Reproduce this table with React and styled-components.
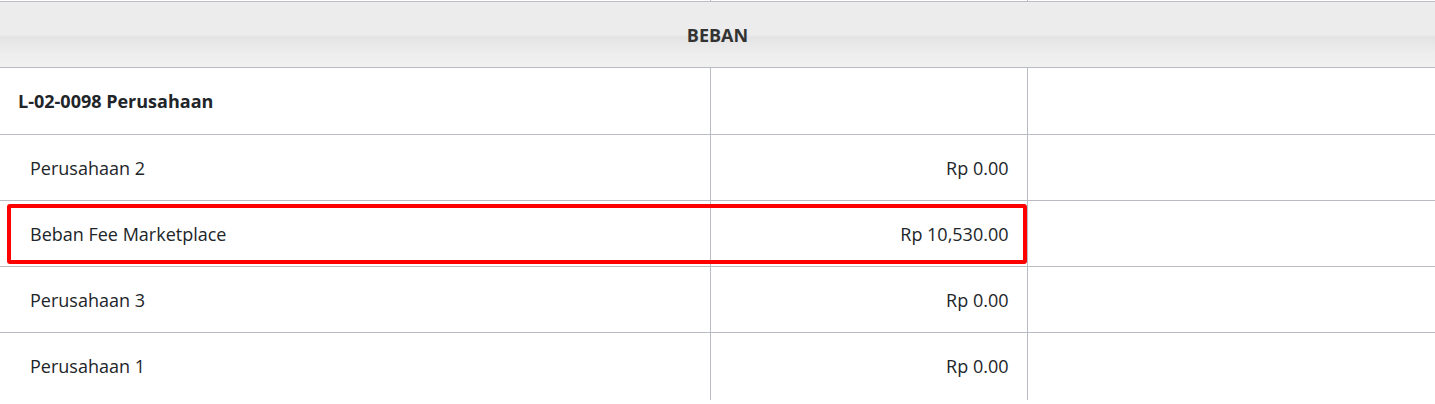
import styled, { createGlobalStyle } from "styled-components";

const GlobalStyle = createGlobalStyle`
  html, body {
    margin: 0;
    padding: 0;
    background: #fff;
  }
  body {
    font-family: "Open Sans", "Liberation Sans", sans-serif;
    color: #212529;
  }
`;

const Table = styled.table`
  width: 1435px;
  border-collapse: collapse;
  table-layout: fixed;
  font-size: 18px;
`;

const Cell = styled.td`
  height: ${props => props.h || 65}px;
  padding: 0 18px 0 ${props => (props.indent ? 30 : 18)}px;
  border-top: 1px solid #b9bcc3;
  border-right: ${props => (props.last ? "none" : "1px solid #b9bcc3")};
  text-align: ${props => (props.right ? "right" : "left")};
  font-weight: ${props => (props.bold ? 700 : 400)};
  vertical-align: middle;
  position: relative;
  box-sizing: border-box;
`;

const Spacer = styled.td`
  height: 1px;
  padding: 0;
  border-right: ${props => (props.last ? "none" : "1px solid #b9bcc3")};
`;

const HeaderCell = styled.th`
  height: 65px;
  padding: 0;
  border-top: 1px solid #b9bcc3;
  background: linear-gradient(
    to bottom,
    #ececec 0%,
    #ececec 50%,
    #e3e3e3 52%,
    #eeeeee 80%,
    #f0f0f0 100%
  );
  font-weight: 700;
  font-size: 18px;
  color: #333;
  text-align: center;
`;

const Highlight = styled.div`
  position: absolute;
  left: 7px;
  top: 3px;
  right: -317px;
  bottom: 2px;
  border: 4px solid #ff0000;
  border-radius: 3px;
  pointer-events: none;
`;

const rows = [
  { name: "Perusahaan 2", amount: "Rp 0.00" },
  { name: "Beban Fee Marketplace", amount: "Rp 10,530.00", marked: true },
  { name: "Perusahaan 3", amount: "Rp 0.00" },
  { name: "Perusahaan 1", amount: "Rp 0.00", h: 67 },
];

export default function App() {
  return (
    <>
      <GlobalStyle />
      <Table>
        <colgroup>
          <col style={{ width: 710 }} />
          <col style={{ width: 317 }} />
          <col style={{ width: 408 }} />
        </colgroup>
        <tbody>
          <tr>
            <Spacer />
            <Spacer />
            <Spacer last />
          </tr>
          <tr>
            <HeaderCell colSpan={3}>BEBAN</HeaderCell>
          </tr>
          <tr>
            <Cell bold h={67}>L-02-0098 Perusahaan</Cell>
            <Cell h={67} />
            <Cell h={67} last />
          </tr>
          {rows.map((row, i) => (
            <tr key={i}>
              <Cell indent h={row.h || 66}>
                {row.name}
                {row.marked && <Highlight />}
              </Cell>
              <Cell right h={row.h || 66}>{row.amount}</Cell>
              <Cell last h={row.h || 66} />
            </tr>
          ))}
        </tbody>
      </Table>
    </>
  );
}
